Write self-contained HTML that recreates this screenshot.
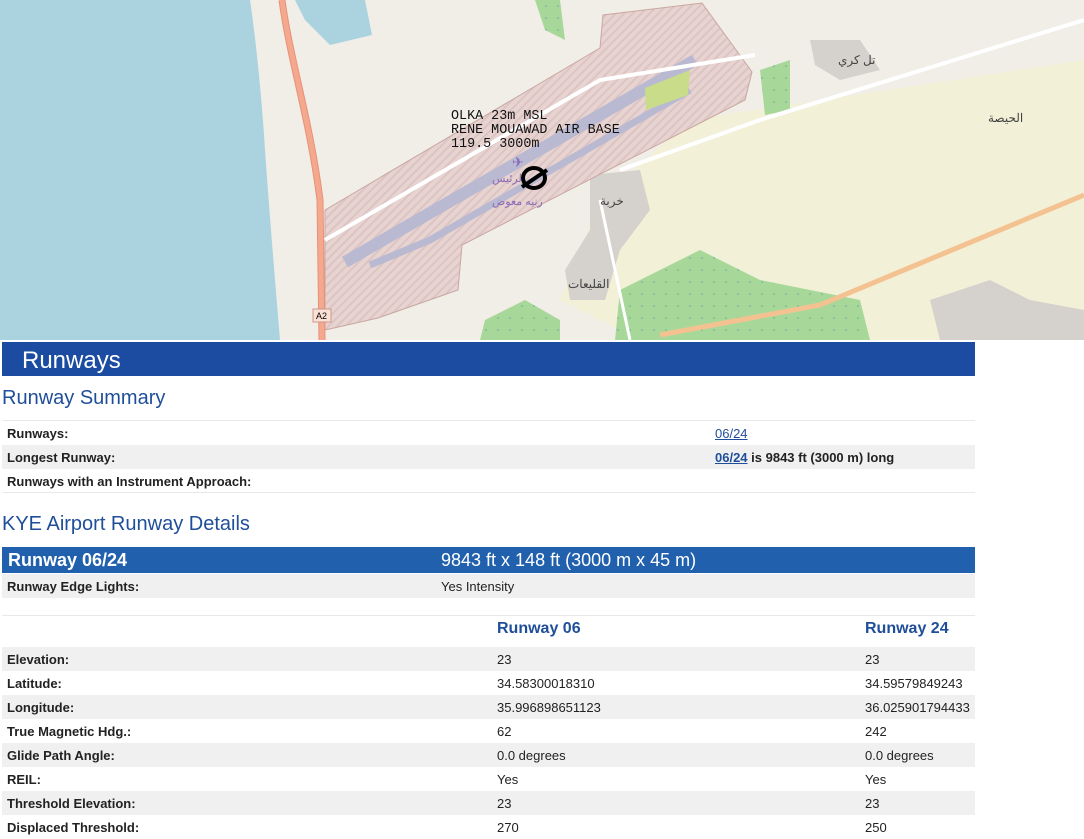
<!DOCTYPE html>
<html><head><meta charset="utf-8"><style>
*{margin:0;padding:0;box-sizing:border-box}
body{width:1084px;height:838px;overflow:hidden;background:#fff;font-family:"Liberation Sans",Arial,sans-serif;position:relative}
#map{position:absolute;left:0;top:0;width:1084px;height:340px;background:#f1eee8;overflow:hidden}
.abs{position:absolute}
.h1{left:2px;top:342px;width:973px;height:34px;background:#1b4ca1;color:#fff;font-size:24px;padding:5px 0 0 20px}
.h2{left:2px;font-size:20px;color:#1f4e9a}
.row{position:absolute;left:2px;width:973px;height:24px;font-size:13px;color:#222}
.row b{position:absolute;left:5px;top:5px}
.g{background:#f0f0f0}
.v{position:absolute;top:5px}
a{color:#1f4e9a;text-decoration:underline}
.bar{left:2px;top:547px;width:973px;height:26px;background:#2160ad;color:#fff;font-size:18px}
</style></head><body>
<div id="map">
<svg width="1084" height="340" viewBox="0 0 1084 340">
<defs><pattern id="h" width="6" height="6" patternUnits="userSpaceOnUse" patternTransform="rotate(45)"><rect width="6" height="6" fill="#e7d3d0"/><rect width="2" height="6" fill="#dcc4c4"/></pattern>
<pattern id="d" width="12" height="12" patternUnits="userSpaceOnUse"><rect width="12" height="12" fill="#a7d89a"/><circle cx="6" cy="6" r="0.8" fill="#6a9"/></pattern></defs>
<path d="M0 0H250C256 40 262 100 265 150C270 220 275 280 280 340H0Z" fill="#aad3df"/>
<path d="M295 0H365L372 35L330 45L305 20Z" fill="#aad3df"/>
<path d="M690 120L1084 60V340H640L560 300L600 200Z" fill="#f2f0d5" opacity=".9"/>
<path d="M620 290L700 250L760 280L860 300L870 340H615Z" fill="url(#d)"/>
<path d="M485 320L525 300L560 320V340H480Z" fill="url(#d)"/>
<path d="M535 0H560L565 40L545 30Z" fill="url(#d)"/>
<path d="M760 70L790 60L790 110L765 115Z" fill="url(#d)"/>
<path d="M590 175L640 170L650 210L620 250L605 300L570 300L565 270L590 230Z" fill="#d5d2cd"/>
<path d="M930 300L990 280L1030 300L1084 310V340H940Z" fill="#d5d2cd"/>
<path d="M810 40L860 40L880 70L840 80L815 65Z" fill="#d5d2cd"/>
<path d="M325 210L600 48L603 15L702 3L752 72L745 100L462 245L458 290L378 318L325 330Z" fill="url(#h)" stroke="#c9a79f" stroke-width="1"/>
<path d="M345 262L695 60" stroke="#b9b9d2" stroke-width="12" fill="none"/>
<path d="M370 265L430 240L690 90" stroke="#b9b9d2" stroke-width="7" fill="none"/>
<path d="M645 88L690 70L688 95L646 110Z" fill="#c8dc8a"/>
<path d="M325 240L600 80L755 55" stroke="#fff" stroke-width="4" fill="none"/>
<path d="M620 170L760 120L1084 20" stroke="#fff" stroke-width="4" fill="none"/>
<path d="M660 335L820 305L1084 195" stroke="#f3c290" stroke-width="5" fill="none"/>
<path d="M282 0C290 60 310 120 320 200L322 340" stroke="#e8907a" stroke-width="7" fill="none"/>
<path d="M282 0C290 60 310 120 320 200L322 340" stroke="#f4a98f" stroke-width="5" fill="none"/>
<path d="M600 200L630 340" stroke="#fff" stroke-width="3"/>
<rect x="313" y="309" width="18" height="13" fill="#fbe0d6" stroke="#c98"/>
<text x="316" y="319" font-size="9" font-family="Liberation Sans">A2</text>
<text x="451" y="119" font-size="13.4" font-family="Liberation Mono" fill="#111">OLKA 23m MSL</text>
<text x="451" y="133" font-size="13.4" font-family="Liberation Mono" fill="#111">RENE MOUAWAD AIR BASE</text>
<text x="451" y="147" font-size="13.4" font-family="Liberation Mono" fill="#111">119.5 3000m</text>
<text x="512" y="167" font-size="14" fill="#8a6bb8">✈</text>
<text x="492" y="182" font-size="11" fill="#8a6bb8" font-family="Liberation Sans,'Noto Sans CJK SC',sans-serif">الرئيس</text>
<text x="492" y="205" font-size="11" fill="#8a6bb8" font-family="Liberation Sans,'Noto Sans CJK SC',sans-serif">رنيه معوض</text>
<ellipse cx="534" cy="178" rx="11" ry="10" fill="none" stroke="#000" stroke-width="4"/>
<path d="M522 187L547 170" stroke="#000" stroke-width="4"/>
<text x="600" y="205" font-size="12" fill="#444">خربة</text>
<text x="568" y="288" font-size="12" fill="#444">القليعات</text>
<text x="838" y="64" font-size="12" fill="#444">تل كري</text>
<text x="988" y="122" font-size="12" fill="#444">الحيصة</text>
</svg>
</div>
<div class="abs h1">Runways</div>
<div class="abs h2" style="top:387px">Runway Summary</div>
<div class="row" style="top:420px;border-top:1px solid #e8e8e8"><b>Runways:</b><span class="v" style="left:713px"><a>06/24</a></span></div>
<div class="row g" style="top:445px"><b>Longest Runway:</b><span class="v" style="left:713px;font-weight:bold"><a>06/24</a> is 9843 ft (3000 m) long</span></div>
<div class="row" style="top:469px;border-bottom:1px solid #e8e8e8"><b>Runways with an Instrument Approach:</b></div>
<div class="abs h2" style="top:513px">KYE Airport Runway Details</div>
<div class="abs bar"><b style="position:absolute;left:6px;top:3px">Runway 06/24</b><span style="position:absolute;left:439px;top:3px">9843 ft x 148 ft (3000 m x 45 m)</span></div>
<div class="row g" style="top:574px"><b>Runway Edge Lights:</b><span class="v" style="left:439px">Yes Intensity</span></div>
<div class="row" style="top:615px;height:31px;border-top:1px solid #e8e8e8"><b class="v" style="left:495px;top:4px;font-size:16px;color:#1f4e9a">Runway 06</b><b class="v" style="left:863px;top:4px;font-size:16px;color:#1f4e9a">Runway 24</b></div>
<div class="row g" style="top:647px"><b>Elevation:</b><span class="v" style="left:495px">23</span><span class="v" style="left:863px">23</span></div>
<div class="row" style="top:671px"><b>Latitude:</b><span class="v" style="left:495px">34.58300018310</span><span class="v" style="left:863px">34.59579849243</span></div>
<div class="row g" style="top:695px"><b>Longitude:</b><span class="v" style="left:495px">35.996898651123</span><span class="v" style="left:863px">36.025901794433</span></div>
<div class="row" style="top:719px"><b>True Magnetic Hdg.:</b><span class="v" style="left:495px">62</span><span class="v" style="left:863px">242</span></div>
<div class="row g" style="top:743px"><b>Glide Path Angle:</b><span class="v" style="left:495px">0.0 degrees</span><span class="v" style="left:863px">0.0 degrees</span></div>
<div class="row" style="top:767px"><b>REIL:</b><span class="v" style="left:495px">Yes</span><span class="v" style="left:863px">Yes</span></div>
<div class="row g" style="top:791px"><b>Threshold Elevation:</b><span class="v" style="left:495px">23</span><span class="v" style="left:863px">23</span></div>
<div class="row" style="top:815px"><b>Displaced Threshold:</b><span class="v" style="left:495px">270</span><span class="v" style="left:863px">250</span></div>
</body></html>
